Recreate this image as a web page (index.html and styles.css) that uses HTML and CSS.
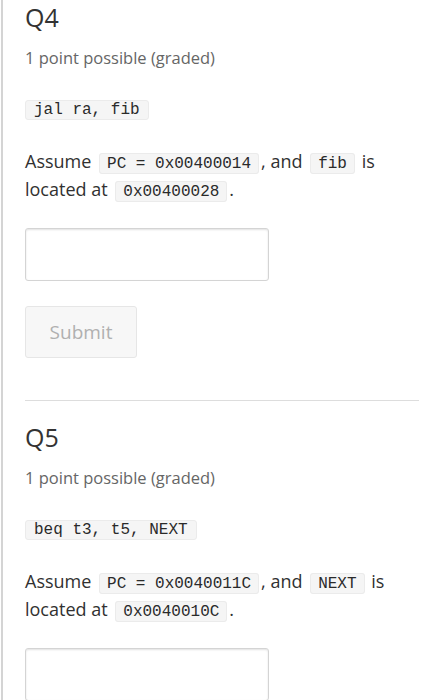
FILE: index.html
```html
<!DOCTYPE html>
<html lang="en">
<head>
<meta charset="utf-8">
<title>Problems</title>
<link rel="stylesheet" href="styles.css">
</head>
<body>
<div class="unit">
  <section class="problem">
    <h2 class="problem-title">Q4</h2>
    <p class="meta">1 point possible (graded)</p>
    <div class="code-block"><code class="block">jal ra, fib</code></div>
    <p class="prompt">Assume <code class="inline">PC = 0x00400014</code>, and <code class="inline">fib</code> is located at <code class="inline">0x00400028</code>.</p>
    <input class="answer" type="text" aria-label="Answer">
    <div class="actions"><button class="submit" type="button">Submit</button></div>
  </section>
  <hr class="divider">
  <section class="problem">
    <h2 class="problem-title">Q5</h2>
    <p class="meta">1 point possible (graded)</p>
    <div class="code-block"><code class="block">beq t3, t5, NEXT</code></div>
    <p class="prompt">Assume <code class="inline">PC = 0x0040011C</code>, and <code class="inline">NEXT</code> is located at <code class="inline">0x0040010C</code>.</p>
    <input class="answer" type="text" aria-label="Answer">
    <div class="actions"><button class="submit" type="button">Submit</button></div>
  </section>
</div>
</body>
</html>
```
FILE: styles.css
```css
* {
  box-sizing: border-box;
}

html, body {
  margin: 0;
  padding: 0;
  background: #ffffff;
}

body {
  font-family: "Open Sans", "Noto Sans", sans-serif;
  color: #313131;
}

.unit {
  margin-left: 1px;
  border-left: 2px solid #d4d4d4;
  padding: 2px 22px 0 22px;
  min-height: 700px;
}

.problem-title {
  margin: 0;
  font-size: 25px;
  line-height: 30px;
  font-weight: 400;
  color: #333333;
}

.meta {
  margin: 14px 0 0 0;
  font-size: 16.5px;
  line-height: 24px;
  color: #666666;
}

.code-block {
  margin-top: 30px;
  line-height: 0;
}

.block {
  display: inline-block;
  font-family: "Liberation Mono", "DejaVu Sans Mono", monospace;
  font-size: 16px;
  line-height: 18px;
  padding: 0 8px;
  background: #f5f5f5;
  border: 1px solid #ebebeb;
  border-radius: 3px;
  color: #2a2a2a;
}

.prompt {
  margin: 27px 0 0 0;
  font-size: 18px;
  line-height: 28px;
  color: #313131;
}

.inline {
  font-family: "Liberation Mono", "DejaVu Sans Mono", monospace;
  font-size: 16px;
  line-height: 18px;
  padding: 1px 7px 0 7px;
  margin: 0 2px 0 3px;
  background: #f5f5f5;
  border: 1px solid #ebebeb;
  border-radius: 3px;
  color: #2a2a2a;
}

.answer {
  display: block;
  margin-top: 25px;
  width: 244px;
  height: 53px;
  border: 1px solid #d4d4d4;
  border-radius: 3px;
  box-shadow: inset 0 1px 2px rgba(0, 0, 0, 0.12);
  background: #ffffff;
  font-family: inherit;
  font-size: 16px;
}

.actions {
  margin-top: 25px;
}

.submit {
  width: 112px;
  height: 52px;
  background: #f7f7f7;
  border: 1px solid #e6e6e6;
  border-radius: 3px;
  font-family: "Open Sans", "Noto Sans", sans-serif;
  font-size: 19px;
  color: #b0b0b0;
  padding: 0;
}

.divider {
  margin: 42px 0 21px 0;
  border: 0;
  border-top: 1px solid #dddddd;
  height: 0;
}
```
